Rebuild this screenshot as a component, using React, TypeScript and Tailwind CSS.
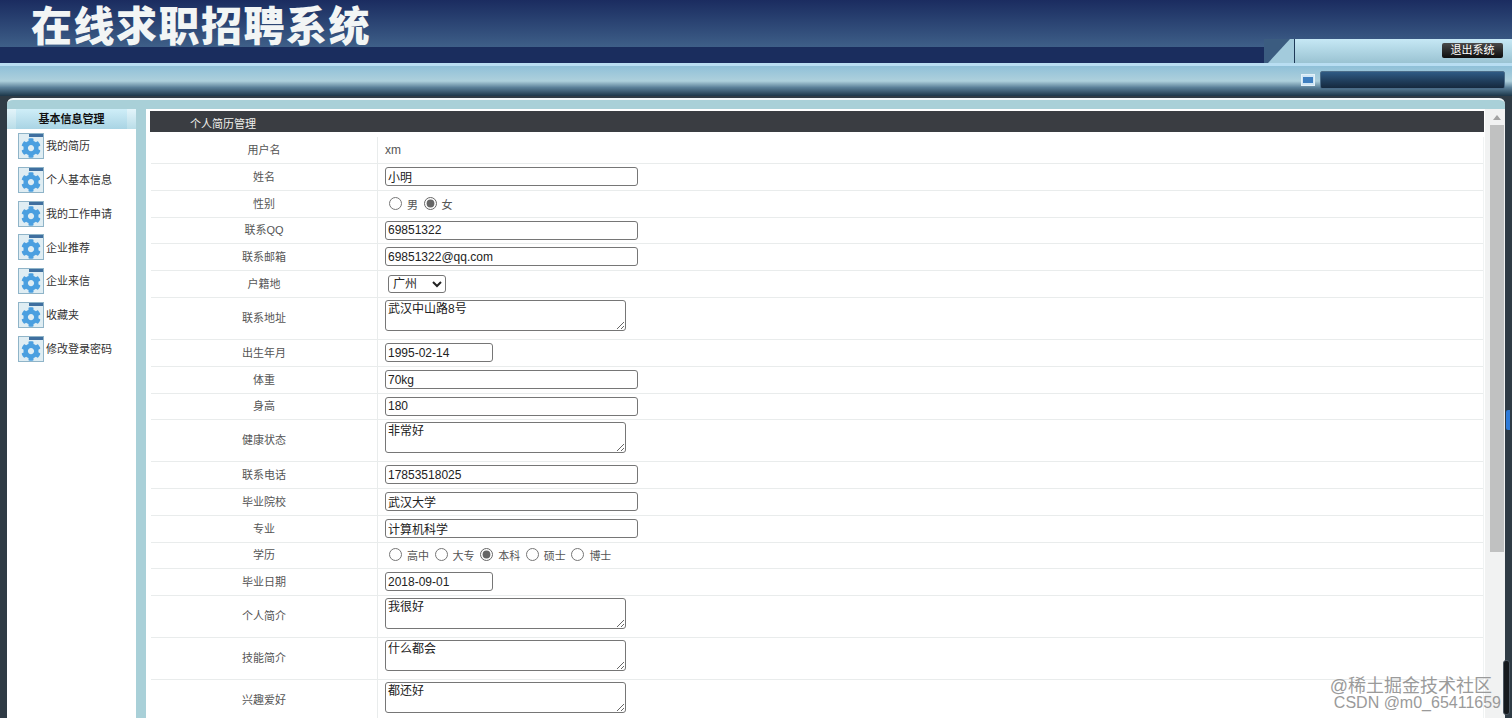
import React from 'react';
import { FaCog } from 'react-icons/fa';

const font = "font-['Liberation_Sans','Noto_Sans_CJK_SC',sans-serif]";

const menuItems = ['我的简历', '个人基本信息', '我的工作申请', '企业推荐', '企业来信', '收藏夹', '修改登录密码'];

const MenuIcon = () => (
  <div className="w-[26px] h-[26px] shrink-0 border border-[#8fb4c8] bg-[#dfedf3] flex flex-col items-center">
    <div className="w-full h-[4px] flex justify-end border-b border-[#dfedf3]">
      <div className="w-[14px] bg-[#3f6f9f]" />
    </div>
    <FaCog className="w-[20px] h-[20px] text-[#4a9fe0]" />
  </div>
);

const Field = ({ value, w = 'w-[253px]' }: { value: string; w?: string }) => (
  <input
    readOnly
    value={value}
    className={`${w} h-[19px] mb-[1px] border border-[#767676] rounded-[3px] px-[2px] text-[12px] text-[#222] bg-white outline-none`}
  />
);

const Area = ({ value }: { value: string }) => (
  <textarea
    readOnly
    value={value}
    className="block w-[241px] h-[31px] border border-[#767676] rounded-[3px] px-[2px] pt-[1px] pb-0 text-[12px] leading-[15px] text-[#222] bg-white outline-none"
  />
);

const Radios = ({ options, checked }: { options: string[]; checked: string }) => (
  <div className="flex items-center pl-[4px] mt-[-2px] text-[11px] text-[#555]">
    {options.map((o) => (
      <label key={o} className="flex items-center mr-[5.6px]">
        <input
          type="radio"
          readOnly
          checked={o === checked}
          className="w-[13px] h-[13px] m-0 mr-[5px] accent-[#666]"
        />
        <span className="mt-[4px]">{o}</span>
      </label>
    ))}
  </div>
);

const Row = ({ label, h = 'h-[27px]', top = false, children }: { label: string; h?: string; top?: boolean; children: React.ReactNode }) => (
  <div className={`grid grid-cols-[227px_1fr] ${h} border-b border-[#e9ecec] shrink-0`}>
    <div className="flex items-center justify-center border-r border-[#e9ecec] text-[11px] text-[#555]">{label}</div>
    <div className={top ? 'flex items-start pl-[7px] pt-[2px]' : 'flex items-center pl-[7px]'}>{children}</div>
  </div>
);

export default function App() {
  return (
    <div className={`${font} relative w-[1512px] h-[718px] overflow-hidden bg-[#2f3b45] flex flex-col`}>
      {/* top banner */}
      <div className="h-[63px] shrink-0 flex bg-gradient-to-b from-[#1b2c60] to-[#4c7196]">
        <div className="flex-1 flex flex-col">
          <div className="h-[47px] pl-[31px] pt-[7px]">
            <div className="text-[41px] leading-[40px] font-black tracking-[1.5px] text-[#f2f5f5]">
              在线求职招聘系统
            </div>
          </div>
          <div className="h-[16px] bg-[#1a2d5e]" />
        </div>
        <div className="w-[248px] self-end h-[24px] flex">
          <svg width="30" height="24" className="shrink-0">
            <rect width="30" height="24" fill="#3b5c80" />
            <polygon points="26,0 30,0 30,24 4,24" fill="#a3cbdc" />
          </svg>
          <div className="flex-1 border-l border-[#1f3a58] bg-gradient-to-b from-[#c6e8f5] to-[#9ac3d2] flex justify-end pt-[4px] pr-[9px]">
            <div className="w-[61px] h-[15px] rounded-[2px] bg-gradient-to-b from-[#4b4b4b] to-[#0e0e0e] text-white text-[11px] leading-[15px] text-center">退出系统</div>
          </div>
        </div>
      </div>

      {/* nav strip */}
      <div className="h-[33px] shrink-0 border-t-[3px] border-[#b9def2] bg-[linear-gradient(to_bottom,#8fc0d8_0%,#aed0dc_50%,#5a7f98_72%,#1c3648_100%)] flex items-center justify-end pr-[7px]">
        <div className="w-[14px] h-[12px] mr-[5px] bg-[#cfe6f5] border border-[#e3f1f9] flex items-center justify-center mt-[-3px]">
          <div className="w-[10px] h-[6px] bg-[#3f7fc0]" />
        </div>
        <div className="w-[185px] h-[18px] mt-[-3px] border border-[#4b6c88] rounded-[2px] bg-gradient-to-b from-[#2f5a84] to-[#15293e]" />
      </div>

      {/* main panel */}
      <div className="mt-[2px] ml-[7px] w-[1498px] flex-1 min-h-0 rounded-t-[6px] border-t-2 border-[#f2f7f8] bg-[#a9d0d8] pt-[9px] flex">
        <aside className="w-[129px] shrink-0 bg-white">
          <div className="h-[20px] bg-gradient-to-b from-[#e3f4fa] to-[#b9dde8] px-[9px]">
            <div className="h-[20px] bg-gradient-to-b from-[#cfeef8] to-[#a9d4e4] text-[11px] leading-[20px] font-bold text-center text-[#111]">
              基本信息管理
            </div>
          </div>
          <div className="pt-[4px] pl-[11px] flex flex-col gap-[7.8px]">
            {menuItems.map((m) => (
              <div key={m} className="flex items-center h-[26px] gap-[2px] text-[11px] text-[#333]">
                <MenuIcon />
                <span className="mt-[1px]">{m}</span>
              </div>
            ))}
          </div>
        </aside>

        <div className="ml-[10px] flex-1 min-w-0 bg-white flex">
          <div className="w-[1339px] pl-[4px] pt-[2px] pr-0 shrink-0">
            <div className="h-[21px] w-[1334px] bg-[#3a3d42] pl-[40px] text-[11px] leading-[27px] text-[#f0f0ec]">个人简历管理</div>
            <div className="mt-[5px] w-[1334px] ml-0 pl-[1px] flex flex-col border-r border-[#f0f3f3]">
              <Row label="用户名"><span className="text-[12px] text-[#555]">xm</span></Row>
              <Row label="姓名"><Field value="小明" /></Row>
              <Row label="性别"><Radios options={['男', '女']} checked="女" /></Row>
              <Row label="联系QQ" h="h-[26px]"><Field value="69851322" /></Row>
              <Row label="联系邮箱"><Field value="69851322@qq.com" /></Row>
              <Row label="户籍地">
                <select className="ml-[3px] w-[58px] h-[18px] border border-[#767676] rounded-[3px] text-[12px] text-[#222] bg-white outline-none">
                  <option>广州</option>
                </select>
              </Row>
              <Row label="联系地址" h="h-[42px]" top><Area value="武汉中山路8号" /></Row>
              <Row label="出生年月"><Field value="1995-02-14" w="w-[108px]" /></Row>
              <Row label="体重"><Field value="70kg" /></Row>
              <Row label="身高" h="h-[26px]"><Field value="180" /></Row>
              <Row label="健康状态" h="h-[42px]" top><Area value="非常好" /></Row>
              <Row label="联系电话"><Field value="17853518025" /></Row>
              <Row label="毕业院校"><Field value="武汉大学" /></Row>
              <Row label="专业"><Field value="计算机科学" /></Row>
              <Row label="学历" h="h-[26px]"><Radios options={['高中', '大专', '本科', '硕士', '博士']} checked="本科" /></Row>
              <Row label="毕业日期"><Field value="2018-09-01" w="w-[108px]" /></Row>
              <Row label="个人简介" h="h-[42px]" top><Area value="我很好" /></Row>
              <Row label="技能简介" h="h-[42px]" top><Area value="什么都会" /></Row>
              <Row label="兴趣爱好" h="h-[42px]" top><Area value="都还好" /></Row>
            </div>
          </div>
          {/* scrollbar */}
          <div className="flex-1 bg-[#f1f2f2] flex flex-col items-end pt-[2px] pr-[1px]">
            <svg width="14" height="14" className="shrink-0">
              <polygon points="7,4 11,9 3,9" fill="#a3a3a3" />
            </svg>
            <div className="w-[14px] h-[427px] bg-[#c0c1c1]" />
          </div>
        </div>
      </div>

      {/* page edge bits */}
      <div className="absolute left-[1506px] top-[410px] w-[4px] h-[20px] rounded-l-[2px] bg-[#2f7bd8]" />
      <div className="absolute left-[1503px] top-[660px] w-[7px] h-[55px] rounded-[3px] bg-[#15191d] border border-[#4a5560]" />

      {/* watermark */}
      <div className="absolute right-[11px] bottom-[7px] text-right text-[#9a9a9a]">
        <div className="text-[18px] leading-[20px] pr-[9px] mb-[-1px]">@稀土掘金技术社区</div>
        <div className="text-[16px] leading-[16px]">CSDN @m0_65411659</div>
      </div>
    </div>
  );
}
